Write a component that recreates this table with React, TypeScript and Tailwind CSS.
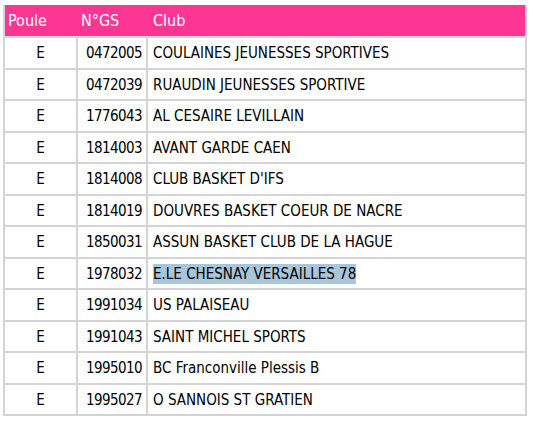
import React from "react";

const rows = [
  ["E", "0472005", "COULAINES JEUNESSES SPORTIVES"],
  ["E", "0472039", "RUAUDIN JEUNESSES SPORTIVE"],
  ["E", "1776043", "AL CESAIRE LEVILLAIN"],
  ["E", "1814003", "AVANT GARDE CAEN"],
  ["E", "1814008", "CLUB BASKET D'IFS"],
  ["E", "1814019", "DOUVRES BASKET COEUR DE NACRE"],
  ["E", "1850031", "ASSUN BASKET CLUB DE LA HAGUE"],
  ["E", "1978032", "E.LE CHESNAY VERSAILLES 78"],
  ["E", "1991034", "US PALAISEAU"],
  ["E", "1991043", "SAINT MICHEL SPORTS"],
  ["E", "1995010", "BC Franconville Plessis B"],
  ["E", "1995027", "O SANNOIS ST GRATIEN"],
];

export default function App() {
  return (
    <div
      className="w-[533px] h-[422px] bg-white pt-[5px] pl-[3px]"
      style={{ fontFamily: '"DejaVu Sans Condensed", "DejaVu Sans", sans-serif' }}
    >
      <div className="w-[524px] bg-[#d4d4d4] pl-[2px] pr-[2px] pb-[2px] flex flex-col gap-[2px]">
        <div className="h-[31px] bg-[#fd3694] grid grid-cols-[71px_72px_1fr] items-center text-white text-[16px]">
          <div className="pl-[3px]">Poule</div>
          <div className="pl-[5px]">N°GS</div>
          <div className="pl-[5px]">Club</div>
        </div>
        {rows.map((r) => (
          <div key={r[1]} className="h-[29.5px] grid grid-cols-[71px_68px_1fr] gap-[2px] text-[15px] text-black">
            <div className="bg-white flex items-center justify-center pt-[1px]">{r[0]}</div>
            <div className="bg-white flex items-center pl-[8px] pt-[1px] tracking-[-0.6px]">{r[1]}</div>
            <div className="bg-white flex items-center pl-[5px] pt-[1px]">
              {r[1] === "1978032" ? (
                <span className="bg-[#a8c5da] leading-[20px]">{r[2]}</span>
              ) : (
                r[2]
              )}
            </div>
          </div>
        ))}
      </div>
    </div>
  );
}
